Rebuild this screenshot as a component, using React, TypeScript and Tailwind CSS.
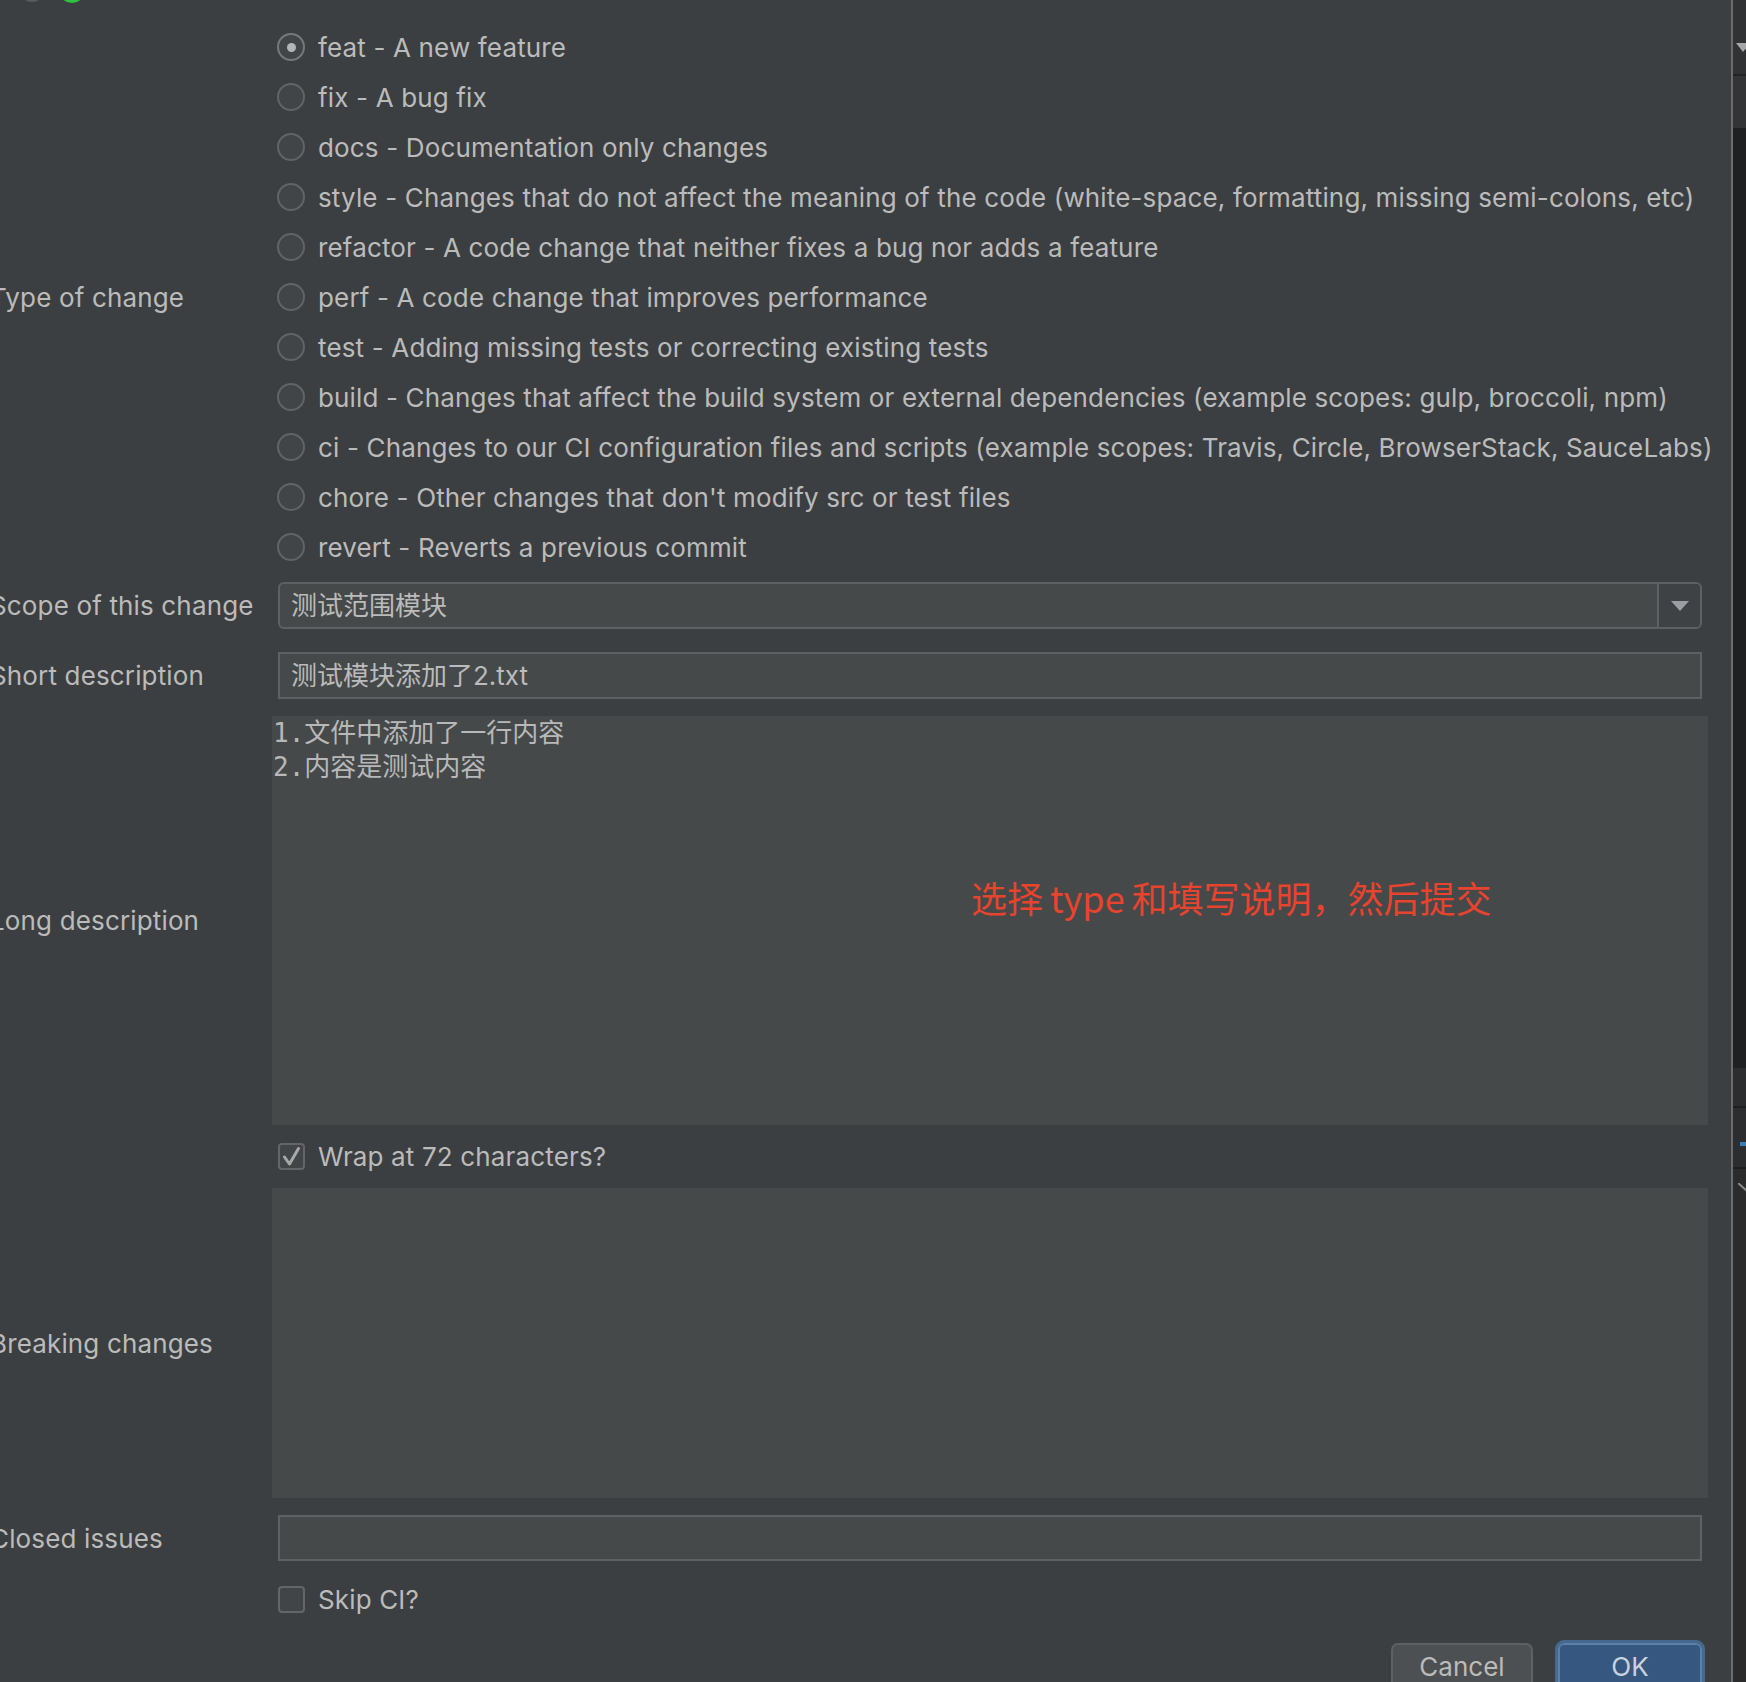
const types = [
  { key: "feat", desc: "A new feature" },
  { key: "fix", desc: "A bug fix" },
  { key: "docs", desc: "Documentation only changes" },
  { key: "style", desc: "Changes that do not affect the meaning of the code (white-space, formatting, missing semi-colons, etc)" },
  { key: "refactor", desc: "A code change that neither fixes a bug nor adds a feature" },
  { key: "perf", desc: "A code change that improves performance" },
  { key: "test", desc: "Adding missing tests or correcting existing tests" },
  { key: "build", desc: "Changes that affect the build system or external dependencies (example scopes: gulp, broccoli, npm)" },
  { key: "ci", desc: "Changes to our CI configuration files and scripts (example scopes: Travis, Circle, BrowserStack, SauceLabs)" },
  { key: "chore", desc: "Other changes that don't modify src or test files" },
  { key: "revert", desc: "Reverts a previous commit" },
];

function Label({ children }: { children?: React.ReactNode }) {
  return <div className="w-[282px] shrink-0 whitespace-nowrap text-[26px] tracking-[0.15px] text-[#bbbbbb]">{children}</div>;
}

function Radio({ checked }: { checked?: boolean }) {
  return (
    <span
      className={`flex h-[28px] w-[28px] shrink-0 items-center justify-center rounded-full border-2 bg-[#414547] ${
        checked ? "border-[#76787a]" : "border-[#616466]"
      }`}
    >
      {checked && <span className="h-[9px] w-[9px] rounded-full bg-[#b5b5b5]" />}
    </span>
  );
}

function Checkbox({ checked }: { checked?: boolean }) {
  return (
    <span className="flex h-[27px] w-[27px] shrink-0 items-center justify-center rounded-[4px] border-2 border-[#636568] bg-[#414547]">
      {checked && (
        <svg width="19" height="21" viewBox="0 0 19 21">
          <path d="M2.5 11 L7.5 18 L16.5 2.5" fill="none" stroke="#a8a8a8" strokeWidth="3" strokeLinecap="round" strokeLinejoin="round" />
        </svg>
      )}
    </span>
  );
}

export default function App() {
  return (
    <div className="relative flex h-[1682px] w-[1746px] overflow-hidden bg-[#3c3f41] font-['Inter','Noto_Sans_CJK_SC',sans-serif] text-[#bbbbbb]">
      {/* window traffic lights, mostly cut off */}
      <span className="absolute left-[19px] top-[-24px] h-[26px] w-[26px] rounded-full bg-[#5b5d5f]" />
      <span className="absolute left-[59px] top-[-23px] h-[26px] w-[26px] rounded-full bg-[#2dc23f]" />

      <div className="w-[1731px] shrink-0">
        <div className="ml-[-10px] mr-[23px] flex flex-col">
          {/* type of change */}
          <div className="flex items-center pt-[22px]">
            <Label>Type of change</Label>
            <div className="flex flex-col">
              {types.map((t, i) => (
                <div
                  key={t.key}
                  className="flex h-[50px] items-center gap-[13px] pl-[5px] text-[26px] tracking-[0.15px] whitespace-nowrap"
                >
                  <Radio checked={i === 0} />
                  <span>
                    {t.key} - {t.desc}
                  </span>
                </div>
              ))}
            </div>
          </div>

          {/* scope */}
          <div className="mt-[10px] flex items-center">
            <Label>Scope of this change</Label>
            <div className="ml-[6px] mr-[6px] flex h-[47px] flex-1 overflow-hidden rounded-[6px] border-2 border-[#5e6163] bg-[#45494a]">
              <div className="flex flex-1 items-center pl-[11px] text-[26px]">测试范围模块</div>
              <div className="flex w-[43px] items-center justify-center border-l-2 border-[#5e6163] bg-[#3f4244]">
                <svg width="18" height="10" viewBox="0 0 18 10">
                  <path d="M0 0 H18 L9 10 Z" fill="#9b9ea2" />
                </svg>
              </div>
            </div>
          </div>

          {/* short description */}
          <div className="mt-[23px] flex items-center">
            <Label>Short description</Label>
            <div className="ml-[6px] mr-[6px] flex h-[47px] flex-1 items-center border-2 border-[#5e6163] bg-[#45494a] pl-[11px] text-[26px]">
              测试模块添加了2.txt
            </div>
          </div>

          {/* long description */}
          <div className="mt-[17px] flex items-center">
            <Label>Long description</Label>
            <div className="relative h-[409px] flex-1 bg-[#45494a] pl-[1px] font-['DejaVu_Sans_Mono','Noto_Sans_CJK_SC',monospace] text-[26px] leading-[34px] text-[#b8b8b8]">
              <div>1.文件中添加了一行内容</div>
              <div>2.内容是测试内容</div>
              <span className="absolute left-[699px] top-[157px] font-['Noto_Sans_CJK_SC',sans-serif] text-[36px] leading-[48px] whitespace-nowrap text-[#e8432d]">
                选择<span className="mx-[7px]">type</span>和填写说明，然后提交
              </span>
            </div>
          </div>

          {/* wrap */}
          <div className="flex h-[63px] items-center">
            <Label />
            <div className="flex items-center gap-[13px] pl-[6px] text-[26px] tracking-[0.15px]">
              <Checkbox checked />
              <span>Wrap at 72 characters?</span>
            </div>
          </div>

          {/* breaking changes */}
          <div className="flex items-center">
            <Label>Breaking changes</Label>
            <div className="h-[310px] flex-1 bg-[#45494a]" />
          </div>

          {/* closed issues */}
          <div className="mt-[17px] flex items-center">
            <Label>Closed issues</Label>
            <div className="ml-[6px] mr-[6px] h-[46px] flex-1 border-2 border-[#5e6163] bg-[#45494a]" />
          </div>

          {/* skip ci */}
          <div className="flex h-[76px] items-center">
            <Label />
            <div className="flex items-center gap-[13px] pl-[6px] text-[26px] tracking-[0.15px]">
              <Checkbox />
              <span>Skip CI?</span>
            </div>
          </div>

          {/* buttons */}
          <div className="mt-[6px] flex">
            <Label />
            <div className="mr-[6px] flex flex-1 justify-end gap-[25px]">
              <button className="flex h-[47px] w-[142px] items-center justify-center rounded-[7px] border-2 border-[#5e6163] bg-[#4c5052] text-[26px] text-[#bbbbbb]">
                Cancel
              </button>
              <button className="flex h-[47px] w-[144px] items-center justify-center rounded-[6px] border-2 border-[#5b80a9] bg-[#365880] text-[26px] text-[#c9d3de] outline-[3px] outline-solid outline-[#46698f]">
                OK
              </button>
            </div>
          </div>
        </div>
      </div>

      {/* window divider */}
      <div className="w-[2px] shrink-0 bg-[#6a6c6e]" />

      {/* neighbouring window strip */}
      <div className="flex flex-1 flex-col">
        <div className="relative h-[74px] bg-[#303234]">
          <svg className="absolute left-[3px] top-[43px]" width="14" height="9" viewBox="0 0 14 9">
            <path d="M0 0 H14 L7 9 Z" fill="#a5a7a9" />
          </svg>
        </div>
        <div className="h-[2px] bg-[#232425]" />
        <div className="h-[52px] bg-[#323436]" />
        <div className="h-[940px] bg-[#1f2021]" />
        <div className="h-[38px] bg-[#2b2d2f]" />
        <div className="h-[2px] bg-[#1e1f20]" />
        <div className="relative h-[59px] bg-[#2b2d2f]">
          <span className="absolute left-[7px] top-[34px] h-[4px] w-[8px] bg-[#3b7fb5]" />
        </div>
        <div className="h-[2px] bg-[#1e1f20]" />
        <div className="relative flex-1 bg-[#2b2b2b]">
          <svg className="absolute left-[5px] top-[14px]" width="9" height="9" viewBox="0 0 9 9">
            <path d="M0 0 L9 8" stroke="#8a8c8e" strokeWidth="2" />
          </svg>
        </div>
      </div>
    </div>
  );
}
